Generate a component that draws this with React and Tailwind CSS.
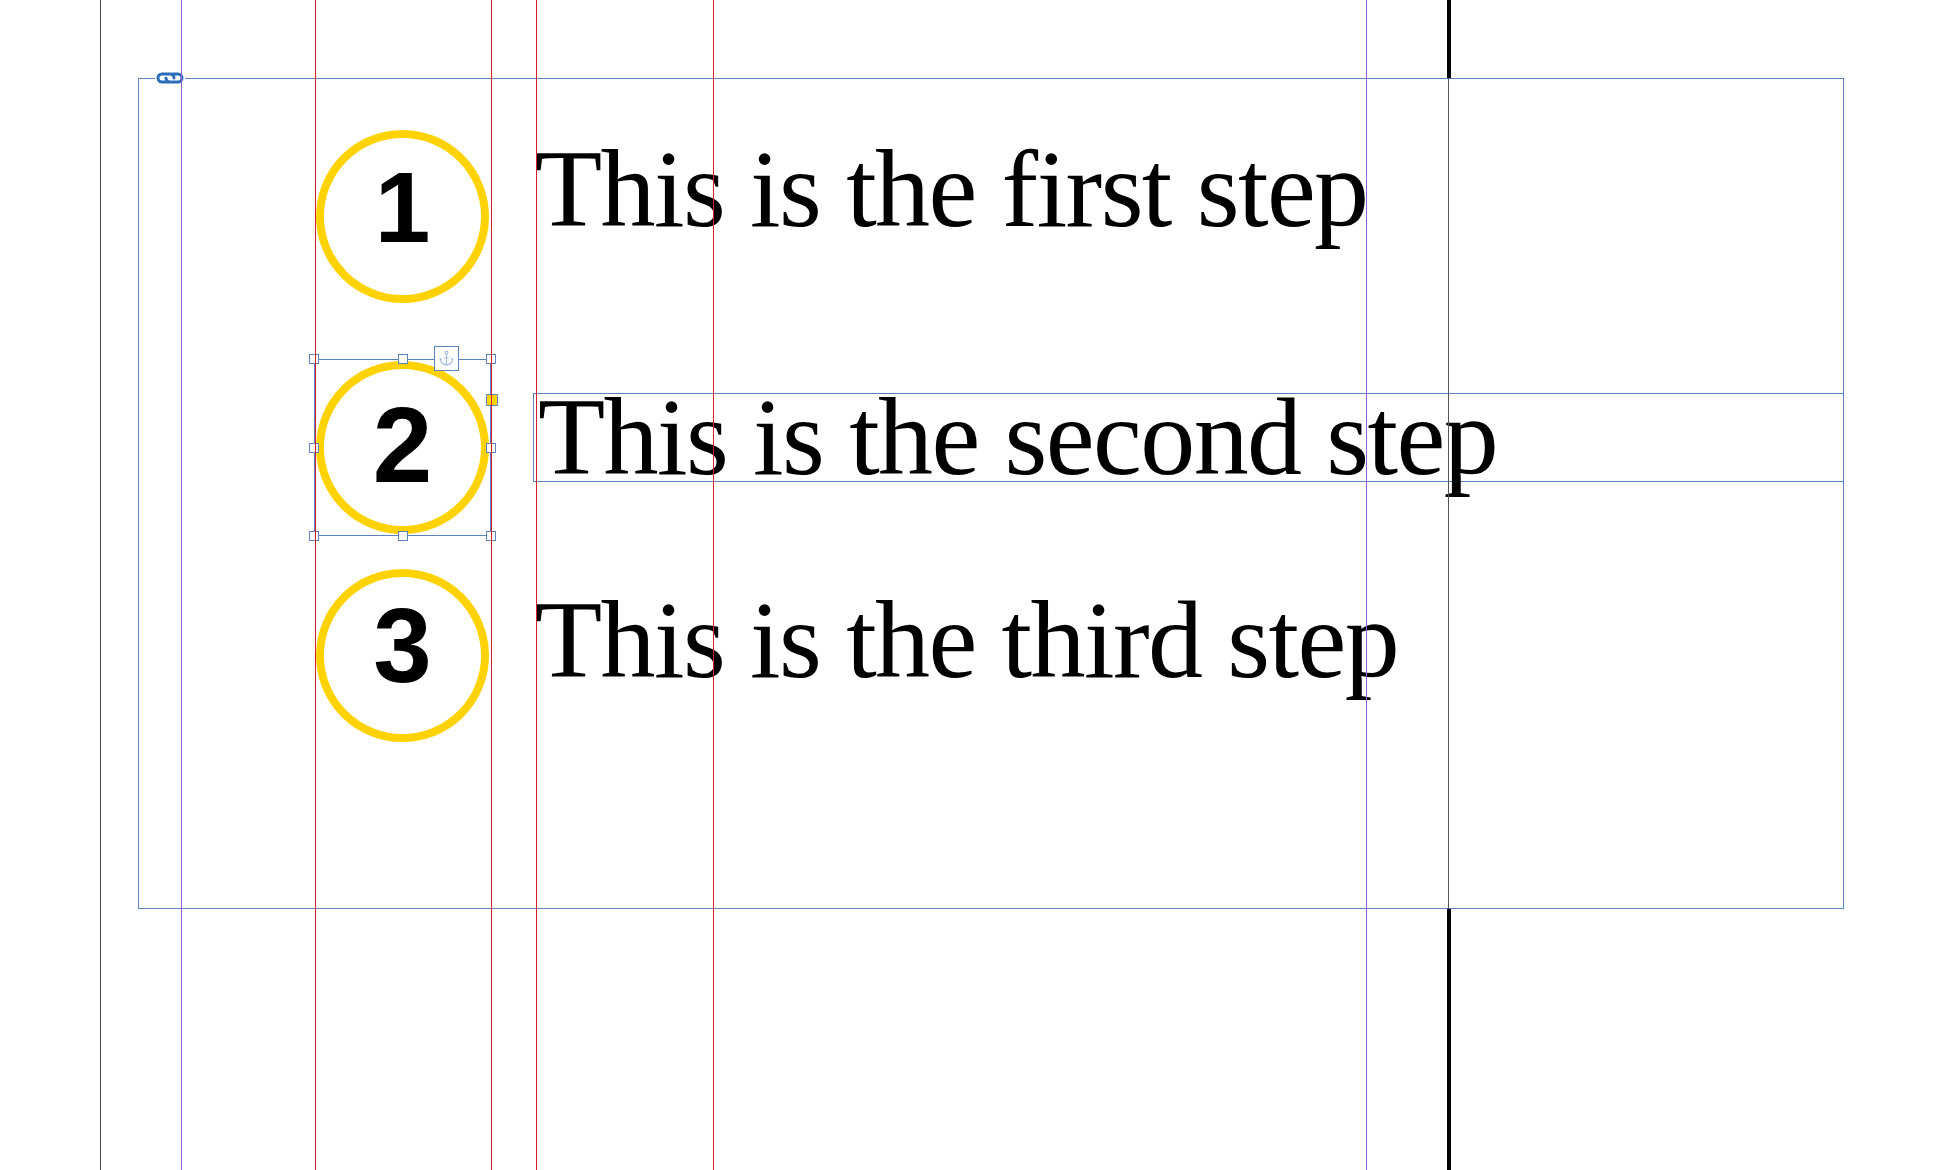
import React from 'react';
import { Anchor } from 'lucide-react';

const serif = "font-['Liberation_Serif',serif] text-[110px] tracking-[-1.6px] text-black whitespace-nowrap";

function Circle({ n, className }) {
    return (
        <div className={`flex h-[173px] w-[173px] shrink-0 justify-center rounded-full border-[8px] border-[#ffd200] ${className}`}>
            <span className="font-['Liberation_Sans',Arial,sans-serif] font-bold leading-none text-black">{n}</span>
        </div>
    );
}

function Handle({ className }) {
    return <span className={`absolute h-[10px] w-[10px] border border-[#5b83bf] bg-white ${className}`} />;
}

// chain icon sitting on the frame's top edge
function LinkIcon() {
    return (
        <svg width="30" height="14" viewBox="0 0 30 14" className="bg-white">
            <path d="M13 11 H7 A4 4 0 0 1 7 3 H15 A4 4 0 0 1 19 7" fill="none" stroke="#2b6cb8" strokeWidth="3" strokeLinecap="round" />
            <path d="M17 3 H23 A4 4 0 0 1 23 11 H15 A4 4 0 0 1 11 7" fill="none" stroke="#2b6cb8" strokeWidth="3" strokeLinecap="round" />
        </svg>
    );
}

export default function App() {
    return (
        <div className="relative h-[1170px] w-full overflow-hidden bg-white">
            {/* text frame on the page */}
            <div className="absolute left-[138px] top-[78px] h-[831px] w-[1706px] border border-[#5b83bf] pl-[175px] pt-[49px]">
                <div className="absolute left-[16px] top-[-8px]">
                    <LinkIcon />
                </div>

                <div className="flex flex-col">
                    <div className="flex items-start">
                        <div className="flex h-[177px] w-[177px] shrink-0 items-center justify-center">
                            <Circle n="1" className="pt-[19px] text-[100px]" />
                        </div>
                        <p className={`ml-[44px] mt-[6px] leading-[110px] ${serif}`}>This is the first step</p>
                    </div>

                    <div className="mt-[54px] flex items-start">
                        <div className="relative flex h-[177px] w-[177px] shrink-0 items-center justify-center border border-[#5b83bf]">
                            <Circle n="2" className="pt-[23px] text-[107px]" />
                            <Handle className="left-[-6px] top-[-6px]" />
                            <Handle className="left-1/2 top-[-6px] -translate-x-1/2" />
                            <Handle className="right-[-6px] top-[-6px]" />
                            <Handle className="left-[-6px] top-1/2 -translate-y-1/2" />
                            <Handle className="right-[-6px] top-1/2 -translate-y-1/2" />
                            <Handle className="bottom-[-6px] left-[-6px]" />
                            <Handle className="bottom-[-6px] left-1/2 -translate-x-1/2" />
                            <Handle className="bottom-[-6px] right-[-6px]" />
                            <span className="absolute left-[119px] top-[-14px] flex h-[25px] w-[25px] items-center justify-center border border-[#5b83bf] bg-white">
                                <Anchor size={17} strokeWidth={1.6} color="#a9bfe2" />
                            </span>
                            <span className="absolute left-[171px] top-[34px] h-[12px] w-[12px] border border-[#5b83bf] bg-[#ffd200]" />
                        </div>
                        <div className="ml-[42px] mr-[-1px] mt-[34px] h-[89px] flex-1 border border-[#5b83bf] pl-[4px]">
                            <p className={`leading-[87px] ${serif}`}>This is the second step</p>
                        </div>
                    </div>

                    <div className="mt-[31px] flex items-start">
                        <div className="flex h-[177px] w-[177px] shrink-0 items-center justify-center">
                            <Circle n="3" className="pt-[16px] text-[105px]" />
                        </div>
                        <p className={`ml-[44px] mt-[18px] leading-[110px] ${serif}`}>This is the third step</p>
                    </div>
                </div>
            </div>

            {/* guides */}
            <div className="pointer-events-none absolute inset-0">
                <div className="absolute left-[100px] top-0 h-full w-px bg-[#4a4a4a]" />
                <div className="absolute left-[181px] top-0 h-full w-px bg-[#9b5ad6]" />
                <div className="absolute left-[315px] top-0 h-full w-px bg-[#d2202c]" />
                <div className="absolute left-[491px] top-0 h-full w-px bg-[#d2202c]" />
                <div className="absolute left-[536px] top-0 h-full w-px bg-[#d2202c]" />
                <div className="absolute left-[713px] top-0 h-full w-px bg-[#d2202c]" />
                <div className="absolute left-[1366px] top-0 h-full w-px bg-[#9b5ad6]" />
                <div className="absolute left-[1448px] top-0 h-full w-px bg-[#555555]" />
                <div className="absolute left-[1447px] top-0 h-[78px] w-[4px] bg-black" />
                <div className="absolute left-[1447px] top-[909px] h-[261px] w-[4px] bg-black" />
            </div>
        </div>
    );
}
